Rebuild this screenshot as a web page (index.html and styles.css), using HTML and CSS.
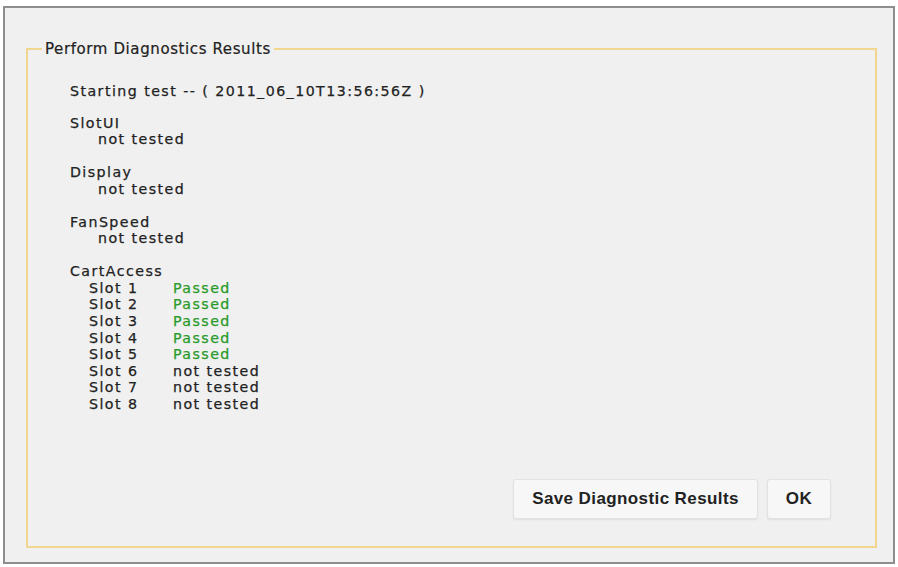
FILE: index.html
```html
<!DOCTYPE html>
<html>
<head>
<meta charset="utf-8">
<link rel="stylesheet" href="styles.css">
</head>
<body>
<div class="dialog">
  <fieldset class="group">
    <legend class="group-title">Perform Diagnostics Results</legend>
    <div class="results">
      <div class="start">Starting test -- ( 2011_06_10T13:56:56Z )</div>
      <div class="test">
        <div class="name">SlotUI</div>
        <div class="status">not tested</div>
      </div>
      <div class="test">
        <div class="name">Display</div>
        <div class="status">not tested</div>
      </div>
      <div class="test">
        <div class="name">FanSpeed</div>
        <div class="status">not tested</div>
      </div>
      <div class="test">
        <div class="name">CartAccess</div>
        <div class="slots">
          <span class="slot">Slot 1</span><span class="pass">Passed</span>
          <span class="slot">Slot 2</span><span class="pass">Passed</span>
          <span class="slot">Slot 3</span><span class="pass">Passed</span>
          <span class="slot">Slot 4</span><span class="pass">Passed</span>
          <span class="slot">Slot 5</span><span class="pass">Passed</span>
          <span class="slot">Slot 6</span><span class="nt">not tested</span>
          <span class="slot">Slot 7</span><span class="nt">not tested</span>
          <span class="slot">Slot 8</span><span class="nt">not tested</span>
        </div>
      </div>
    </div>
    <div class="actions">
      <button class="btn btn-save">Save Diagnostic Results</button>
      <button class="btn btn-ok">OK</button>
    </div>
  </fieldset>
</div>
</body>
</html>
```

FILE: styles.css
```css
html, body {
  margin: 0;
  padding: 0;
  background: #ffffff;
}

body {
  width: 898px;
  height: 567px;
  overflow: hidden;
  font-family: "DejaVu Sans", Verdana, sans-serif;
  color: #222222;
}

.dialog {
  box-sizing: border-box;
  margin: 6px 0 0 3px;
  width: 892px;
  height: 558px;
  border: 2px solid #8e8e8e;
  background: #f0f0f0;
  padding: 32px 16px 14px 21px;
  display: flex;
  flex-direction: column;
}

.group {
  flex: 1;
  margin: 0;
  border: 2px solid #f0d68e;
  padding: 0 44px 26px 42px;
  display: flex;
  flex-direction: column;
  min-width: 0;
}

.group-title {
  font-size: 15px;
  line-height: 18px;
  letter-spacing: 0.6px;
  padding: 0 3px;
  margin-left: -28px;
  color: #222222;
  -webkit-text-stroke: 0.2px #222222;
}

.results {
  flex: 1;
  font-size: 14.2px;
  letter-spacing: 1.45px;
  line-height: 16.55px;
  padding-top: 25px;
  -webkit-text-stroke: 0.25px #222222;
}

.start {
  margin-bottom: 15px;
}

.test {
  margin-bottom: 16.5px;
}

.status {
  padding-left: 28px;
}

.slots {
  display: grid;
  grid-template-columns: 84px auto;
  padding-left: 19px;
}

.pass {
  color: #2a9a2a;
  -webkit-text-stroke: 0.25px #2a9a2a;
}

.actions {
  display: flex;
  justify-content: flex-end;
  gap: 9px;
}

.btn {
  font-family: "Liberation Sans", Arial, sans-serif;
  font-weight: bold;
  font-size: 17px;
  letter-spacing: 0.4px;
  color: #222222;
  height: 40px;
  margin-bottom: 1px;
  background: #f7f7f7;
  border: 1px solid #e2e2e2;
  border-radius: 3px;
  box-shadow: 0 1px 2px rgba(0, 0, 0, 0.08);
  padding: 0;
}

.btn-save {
  width: 245px;
}

.btn-ok {
  width: 64px;
}
```
